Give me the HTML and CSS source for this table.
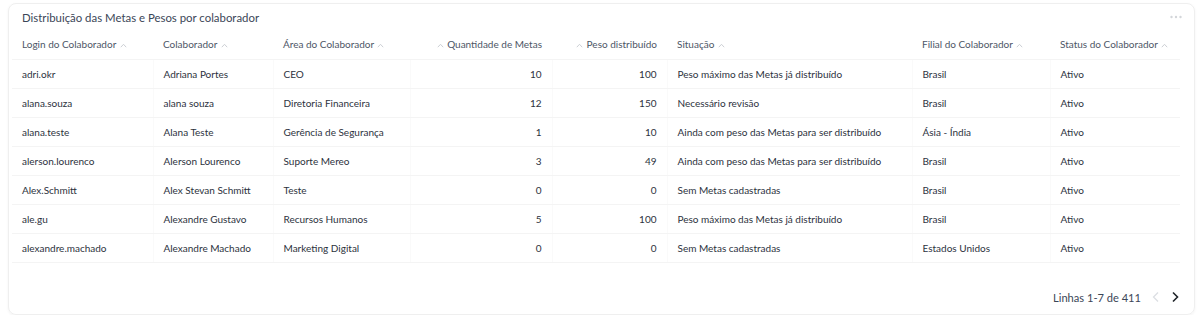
FILE: index.html
```html
<!DOCTYPE html>
<html lang="pt">
<head>
<meta charset="utf-8">
<link rel="stylesheet" href="styles.css">
</head>
<body>
<div class="card">
  <div class="card-head">
    <div class="title">Distribuição das Metas e Pesos por colaborador</div>
    <svg class="more" width="12" height="4" viewBox="0 0 12 4"><circle cx="1.5" cy="2" r="1.2"/><circle cx="6" cy="2" r="1.2"/><circle cx="10.5" cy="2" r="1.2"/></svg>
  </div>
  <table class="grid">
    <colgroup>
      <col style="width:141px"><col style="width:120px"><col style="width:137px"><col style="width:142px">
      <col style="width:115px"><col style="width:245px"><col style="width:138px"><col style="width:130px">
    </colgroup>
    <thead>
      <tr>
        <th>Login do Colaborador <svg class="sort" width="7" height="5" viewBox="0 0 7 5"><path d="M0.8 4.2 L3.5 1.3 L6.2 4.2"/></svg></th>
        <th>Colaborador <svg class="sort" width="7" height="5" viewBox="0 0 7 5"><path d="M0.8 4.2 L3.5 1.3 L6.2 4.2"/></svg></th>
        <th>Área do Colaborador <svg class="sort" width="7" height="5" viewBox="0 0 7 5"><path d="M0.8 4.2 L3.5 1.3 L6.2 4.2"/></svg></th>
        <th class="num"><svg class="sort" width="7" height="5" viewBox="0 0 7 5"><path d="M0.8 4.2 L3.5 1.3 L6.2 4.2"/></svg> Quantidade de Metas</th>
        <th class="num"><svg class="sort" width="7" height="5" viewBox="0 0 7 5"><path d="M0.8 4.2 L3.5 1.3 L6.2 4.2"/></svg> Peso distribuído</th>
        <th>Situação <svg class="sort" width="7" height="5" viewBox="0 0 7 5"><path d="M0.8 4.2 L3.5 1.3 L6.2 4.2"/></svg></th>
        <th>Filial do Colaborador <svg class="sort" width="7" height="5" viewBox="0 0 7 5"><path d="M0.8 4.2 L3.5 1.3 L6.2 4.2"/></svg></th>
        <th>Status do Colaborador <svg class="sort" width="7" height="5" viewBox="0 0 7 5"><path d="M0.8 4.2 L3.5 1.3 L6.2 4.2"/></svg></th>
      </tr>
    </thead>
    <tbody>
      <tr><td>adri.okr</td><td>Adriana Portes</td><td>CEO</td><td class="num">10</td><td class="num">100</td><td>Peso máximo das Metas já distribuído</td><td>Brasil</td><td>Ativo</td></tr>
      <tr><td>alana.souza</td><td>alana souza</td><td>Diretoria Financeira</td><td class="num">12</td><td class="num">150</td><td>Necessário revisão</td><td>Brasil</td><td>Ativo</td></tr>
      <tr><td>alana.teste</td><td>Alana Teste</td><td>Gerência de Segurança</td><td class="num">1</td><td class="num">10</td><td>Ainda com peso das Metas para ser distribuído</td><td>Ásia - Índia</td><td>Ativo</td></tr>
      <tr><td>alerson.lourenco</td><td>Alerson Lourenco</td><td>Suporte Mereo</td><td class="num">3</td><td class="num">49</td><td>Ainda com peso das Metas para ser distribuído</td><td>Brasil</td><td>Ativo</td></tr>
      <tr><td>Alex.Schmitt</td><td>Alex Stevan Schmitt</td><td>Teste</td><td class="num">0</td><td class="num">0</td><td>Sem Metas cadastradas</td><td>Brasil</td><td>Ativo</td></tr>
      <tr><td>ale.gu</td><td>Alexandre Gustavo</td><td>Recursos Humanos</td><td class="num">5</td><td class="num">100</td><td>Peso máximo das Metas já distribuído</td><td>Brasil</td><td>Ativo</td></tr>
      <tr><td>alexandre.machado</td><td>Alexandre Machado</td><td>Marketing Digital</td><td class="num">0</td><td class="num">0</td><td>Sem Metas cadastradas</td><td>Estados Unidos</td><td>Ativo</td></tr>
    </tbody>
  </table>
  <div class="pager">
    <span class="range">Linhas 1-7 de 411</span>
    <svg class="arrow off" width="10" height="12" viewBox="0 0 10 12"><path d="M7 1.5 L2.5 6 L7 10.5"/></svg>
    <svg class="arrow" width="10" height="12" viewBox="0 0 10 12"><path d="M3 1.5 L7.5 6 L3 10.5"/></svg>
  </div>
</div>
</body>
</html>
```
FILE: styles.css
```css
html, body {
  margin: 0;
  padding: 0;
  background: #ffffff;
}
body {
  font-family: Lato, "Open Sans", sans-serif;
  color: #2e3440;
  padding: 3px 6px 0 8px;
}
.card {
  box-sizing: border-box;
  width: 1187px;
  height: 312px;
  border: 1px solid #efefef;
  border-radius: 8px;
  box-shadow: 0 1px 3px rgba(0,0,0,0.05);
  padding: 0 3px;
  display: flex;
  flex-direction: column;
}
.card-head {
  display: flex;
  justify-content: space-between;
  align-items: center;
  height: 26px;
  padding: 0 9px 0 10px;
}
.title {
  font-size: 11.4px;
  color: #3b4657;
}
.more {
  fill: #d3d6da;
}
.grid {
  border-collapse: collapse;
  table-layout: fixed;
  width: 1168px;
  font-size: 10px;
}
.grid th {
  font-weight: normal;
  color: #4d5666;
  text-align: left;
  height: 28px;
  padding: 0 10px 1px;
  white-space: nowrap;
  overflow: hidden;
  border-bottom: 1px solid #f4f4f4;
}
.grid td {
  height: 28px;
  padding: 0 10px;
  white-space: nowrap;
  overflow: hidden;
  color: #2c323d;
  border-bottom: 1px solid #f4f4f4;
  border-left: 1px solid #fafafa;
}
.grid td:first-child {
  border-left: none;
}
.grid .num {
  text-align: right;
}
.sort {
  fill: none;
  stroke: #c6cacf;
  stroke-width: 0.9;
  margin: 0 1px;
}
.pager {
  margin-top: auto;
  display: flex;
  justify-content: flex-end;
  align-items: center;
  gap: 9px;
  height: 34px;
  padding-right: 11px;
  font-size: 11.1px;
  color: #3b4657;
}
.range {
  margin-right: 1px;
}
.arrow path {
  fill: none;
  stroke: #1f2329;
  stroke-width: 1.6;
}
.arrow.off path {
  stroke: #dcdfe3;
  stroke-width: 1.3;
}
```
